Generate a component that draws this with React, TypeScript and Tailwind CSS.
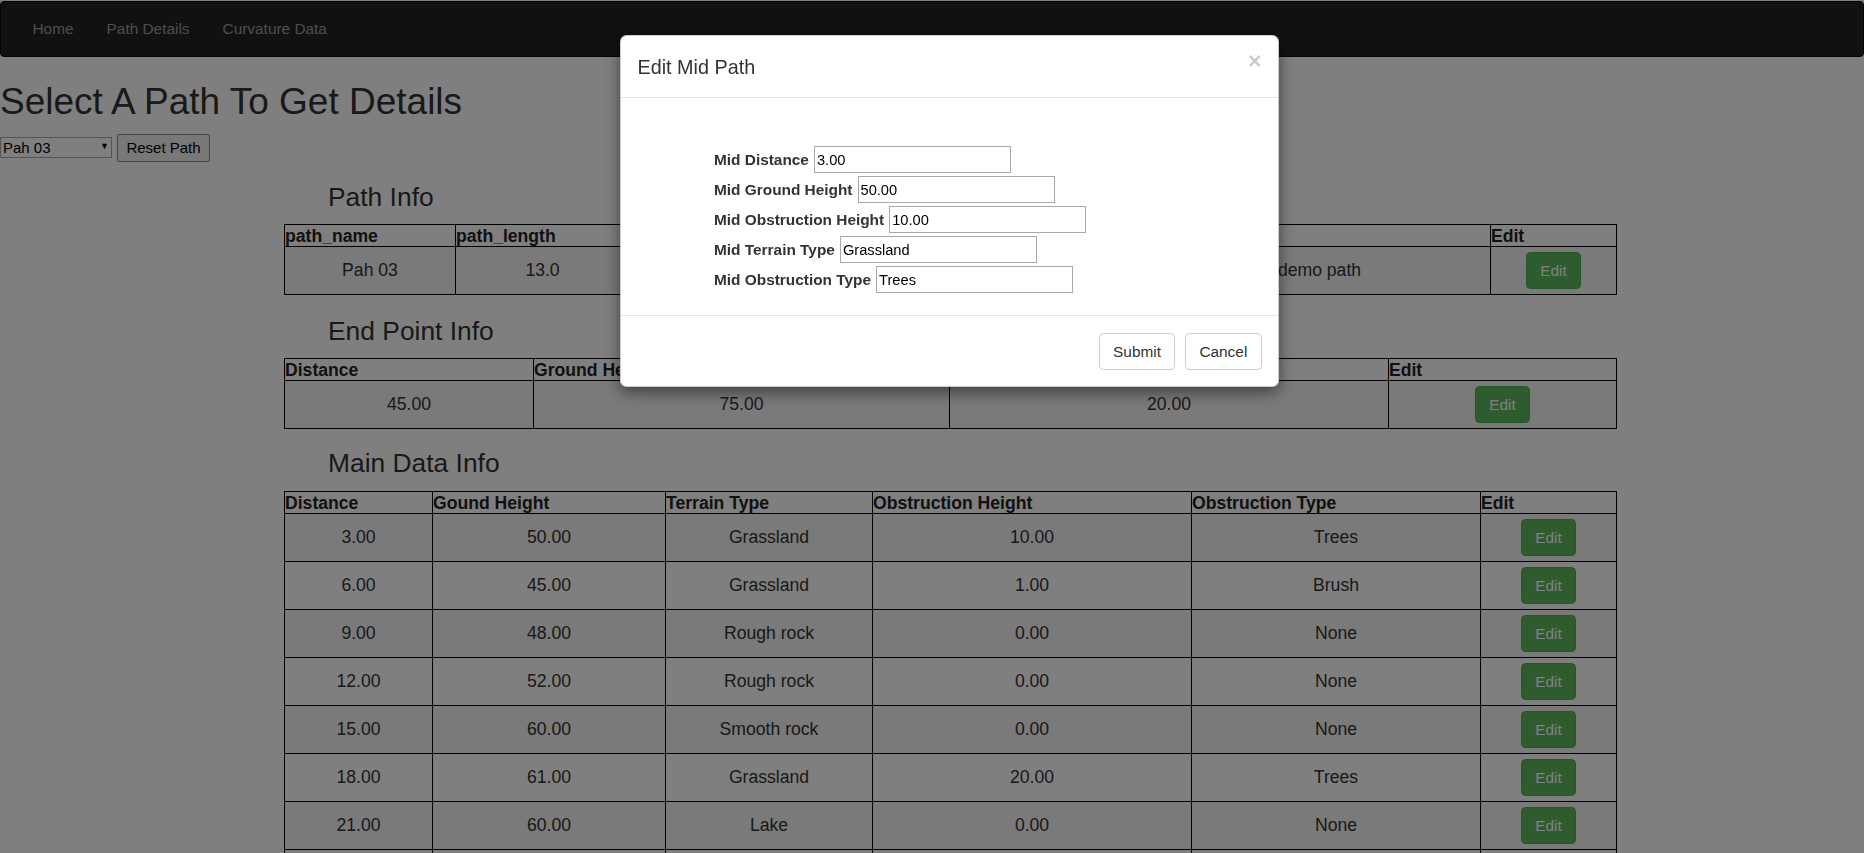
import React from "react";

const pathCols = [
  { label: "path_name", w: "w-[171px]" },
  { label: "path_length", w: "w-[174px]" },
  { label: "path_freq", w: "w-[260px]" },
  { label: "path_type", w: "w-[259px]" },
  { label: "path_desc", w: "w-[342px]" },
  { label: "Edit", w: "w-[126px]" },
];

const pathRow = ["Pah 03", "13.0", "900", "PtP", "demo path"];

const endCols = [
  { label: "Distance", w: "w-[249px]" },
  { label: "Ground Height", w: "w-[416px]" },
  { label: "Antenna Height", w: "w-[439px]" },
  { label: "Edit", w: "w-[228px]" },
];

const endRow = ["45.00", "75.00", "20.00"];

const mainCols = [
  { label: "Distance", w: "w-[148px]" },
  { label: "Gound Height", w: "w-[233px]" },
  { label: "Terrain Type", w: "w-[207px]" },
  { label: "Obstruction Height", w: "w-[319px]" },
  { label: "Obstruction Type", w: "w-[289px]" },
  { label: "Edit", w: "w-[136px]" },
];

const mainRows = [
  ["3.00", "50.00", "Grassland", "10.00", "Trees"],
  ["6.00", "45.00", "Grassland", "1.00", "Brush"],
  ["9.00", "48.00", "Rough rock", "0.00", "None"],
  ["12.00", "52.00", "Rough rock", "0.00", "None"],
  ["15.00", "60.00", "Smooth rock", "0.00", "None"],
  ["18.00", "61.00", "Grassland", "20.00", "Trees"],
  ["21.00", "60.00", "Lake", "0.00", "None"],
  ["24.00", "58.00", "Grassland", "5.00", "Brush"],
  ["27.00", "55.00", "Grassland", "0.00", "None"],
];

const fields = [
  { label: "Mid Distance", value: "3.00" },
  { label: "Mid Ground Height", value: "50.00" },
  { label: "Mid Obstruction Height", value: "10.00" },
  { label: "Mid Terrain Type", value: "Grassland" },
  { label: "Mid Obstruction Type", value: "Trees" },
];

function EditButton() {
  return (
    <button className="inline-flex h-[37px] items-center rounded-[4.4px] border border-[#4cae4c] bg-[#5cb85c] px-[13.2px] text-[15.4px] text-white">
      Edit
    </button>
  );
}

type Col = { label: string; w: string };

function DataTable({ cols, rows }: { cols: Col[]; rows: string[][] }) {
  return (
    <table className="w-[1332px] table-fixed border-collapse">
      <thead>
        <tr>
          {cols.map((c) => (
            <th
              key={c.label}
              className={`${c.w} h-[22px] border border-black p-0 text-left align-middle text-[17.6px] leading-[20px] font-bold text-[#222]`}
            >
              {c.label}
            </th>
          ))}
        </tr>
      </thead>
      <tbody>
        {rows.map((r, i) => (
          <tr key={i} className={i % 2 === 0 ? "bg-[#f4f4f4]" : ""}>
            {r.map((v, j) => (
              <td
                key={j}
                className="h-[48px] border border-black p-0 text-center align-middle text-[17.6px] text-[#333]"
              >
                {v}
              </td>
            ))}
            <td className="h-[48px] border border-black p-0 text-center align-middle">
              <EditButton />
            </td>
          </tr>
        ))}
      </tbody>
    </table>
  );
}

export default function App() {
  return (
    <div className="relative h-screen overflow-hidden bg-white font-['Liberation_Sans',Arial,sans-serif] text-[#333]">
      {/* Navbar */}
      <nav className="mt-px flex h-[56px] items-center rounded-[4px] border border-[#080808] bg-[#222] px-[15px]">
        {["Home", "Path Details", "Curvature Data"].map((l) => (
          <a key={l} className="px-[16.5px] text-[15.4px] text-[#9d9d9d]">
            {l}
          </a>
        ))}
      </nav>

      <h1 className="mt-[25px] text-[37px] leading-[40px] font-normal">Select A Path To Get Details</h1>

      <div className="mt-[12px] flex items-center gap-[5px]">
        <div className="relative">
          <select className="h-[21px] w-[112px] appearance-none border border-[#a9a9a9] bg-white pl-[2px] text-[15px] leading-[17px] text-black">
            <option>Pah 03</option>
          </select>
          <span className="pointer-events-none absolute top-[4px] left-[100px] text-[9px] text-black">▼</span>
        </div>
        <button className="h-[28px] w-[93px] rounded-[2px] border border-[#8a8a8a] bg-[#f0f0f0] text-[15px] text-black">
          Reset Path
        </button>
      </div>

      {/* Content */}
      <div className="ml-[284px] w-[1332px]">
        <h3 className="mt-[21px] mb-[12px] pl-[44px] text-[26.4px] leading-[29px] font-normal">Path Info</h3>
        <DataTable cols={pathCols} rows={[pathRow]} />

        <h3 className="mt-[22px] mb-[12px] pl-[44px] text-[26.4px] leading-[29px] font-normal">End Point Info</h3>
        <DataTable cols={endCols} rows={[endRow]} />

        <h3 className="mt-[20px] mb-[13px] pl-[44px] text-[26.4px] leading-[29px] font-normal">Main Data Info</h3>
        <DataTable cols={mainCols} rows={mainRows} />
      </div>

      {/* Backdrop */}
      <div className="fixed inset-0 bg-black/50" />

      {/* Modal */}
      <div className="fixed top-[35px] left-[620px] w-[659px] rounded-[6.6px] border border-black/20 bg-white shadow-[0_5px_15px_rgba(0,0,0,0.5)]">
        <div className="flex items-start border-b border-[#e5e5e5] p-[16.5px]">
          <h4 className="text-[19.8px] leading-[28.3px] font-normal text-[#333]">Edit Mid Path</h4>
          <span className="mt-[-3px] ml-auto text-[23px] leading-none font-bold text-black opacity-20">×</span>
        </div>

        <div className="flex flex-col gap-[3px] pt-[48px] pb-[22px] pl-[93px]">
          {fields.map((f) => (
            <div key={f.label} className="flex items-center gap-[5px]">
              <label className="text-[15.4px] font-bold text-[#333]">{f.label}</label>
              <input
                defaultValue={f.value}
                className="h-[27px] w-[197px] border border-[#a9a9a9] px-[2px] text-[14.67px] text-black outline-none"
              />
            </div>
          ))}
        </div>

        <div className="flex justify-end gap-[10px] border-t border-[#e5e5e5] p-[16.5px]">
          <button className="h-[37px] rounded-[4.4px] border border-[#ccc] bg-white px-[13.2px] text-[15.4px] text-[#333]">
            Submit
          </button>
          <button className="h-[37px] rounded-[4.4px] border border-[#ccc] bg-white px-[13.2px] text-[15.4px] text-[#333]">
            Cancel
          </button>
        </div>
      </div>
    </div>
  );
}
